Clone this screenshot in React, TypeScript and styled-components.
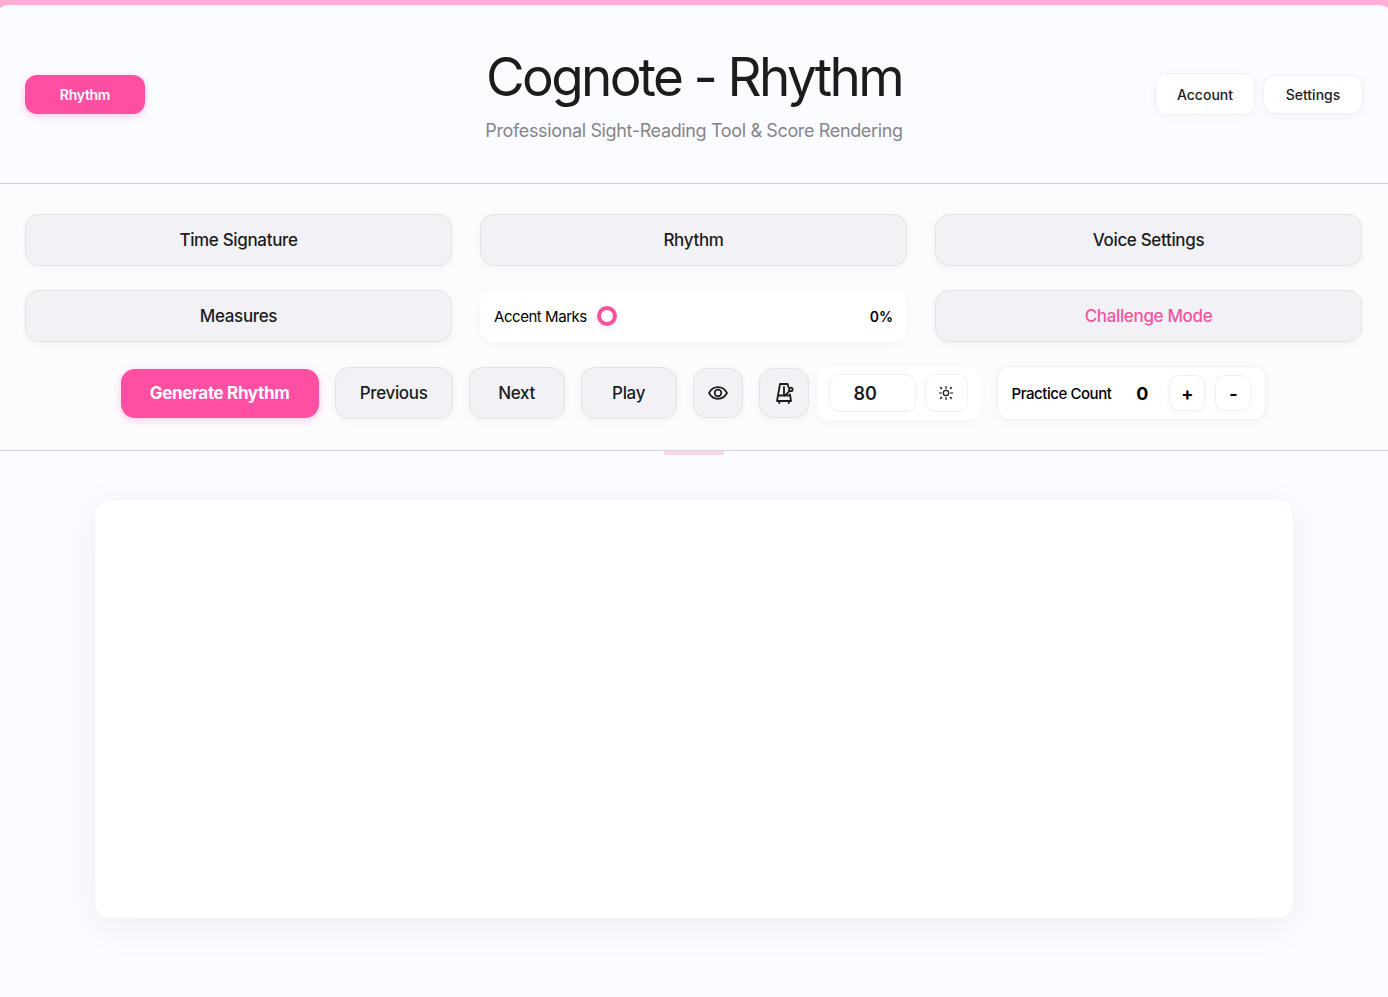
import React, { useState } from 'react';
import styled, { createGlobalStyle, css } from 'styled-components';

const GlobalStyle = createGlobalStyle`
  *, *::before, *::after { box-sizing: border-box; }
  body {
    margin: 0;
    background: #ffaed5;
    color: #1c1c1e;
    font-family: Inter, "Liberation Sans", sans-serif;
    -webkit-font-smoothing: antialiased;
  }
  button, input { font: inherit; color: inherit; letter-spacing: inherit; }
  button { cursor: pointer; }
`;

const Page = styled.div`
  min-height: 100vh;
  padding-top: 5px;
  display: flex;
  flex-direction: column;
`;

const Shell = styled.div`
  flex: 1;
  display: flex;
  flex-direction: column;
  border-radius: 10px 10px 0 0 / 4px 4px 0 0;
  background: #fbfcff;
`;

const Header = styled.header`
  display: grid;
  grid-template-columns: 1fr auto 1fr;
  align-items: center;
  padding: 40px 25px;
  min-height: 179px;
  border-bottom: 1px solid #d1d1d6;
`;

const Heading = styled.div`
  text-align: center;
`;

const Title = styled.h1`
  margin: 0;
  font-size: 53px;
  line-height: 64px;
  font-weight: 400;
  letter-spacing: -0.05em;
`;

const Subtitle = styled.p`
  margin: 10px 0 0;
  font-size: 18px;
  line-height: 24px;
  letter-spacing: -0.02em;
  color: #85858a;
`;

const HeaderActions = styled.div`
  display: flex;
  align-items: center;
  justify-content: flex-end;
  gap: 8px;
`;

const surface = css`
  border: 1px solid #f0f0f2;
  background: #fff;
  box-shadow: 0 2px 8px rgba(0, 0, 0, 0.04);
`;

const ModeButton = styled.button`
  justify-self: start;
  width: 120px;
  height: 39px;
  border: 0;
  border-radius: 12px;
  background: #ff4fa3;
  color: #fff;
  font-size: 14px;
  font-weight: 600;
  letter-spacing: -0.02em;
  box-shadow: 0 2px 8px rgba(255, 79, 163, 0.3);
`;

const HeaderButton = styled.button<{ $tall?: boolean }>`
  ${surface}
  width: 100px;
  height: ${(p) => (p.$tall ? 42 : 39)}px;
  padding: 0;
  border-radius: 12px;
  font-size: 14px;
  font-weight: 500;
`;

const Controls = styled.section`
  padding: 30px 26px 30px 25px;
  border-bottom: 1px solid #d1d1d6;
  background: #fcfcfe;
`;

const SettingsGrid = styled.div`
  display: grid;
  grid-template-columns: repeat(3, 1fr);
  gap: 24px 28px;
`;

const SoftButton = styled.button<{ $accent?: boolean }>`
  height: 52px;
  padding: 0 25px;
  border: 1px solid #e3e3e6;
  border-radius: 14px;
  background: #f2f2f6;
  color: ${(p) => (p.$accent ? '#f0559f' : '#1c1c1e')};
  font-size: 17px;
  font-weight: 500;
  letter-spacing: -0.02em;
  box-shadow: 0 2px 8px rgba(0, 0, 0, 0.04);
`;

const AccentPanel = styled.div`
  display: flex;
  align-items: center;
  gap: 10px;
  height: 52px;
  padding: 0 14px;
  border-radius: 14px;
  background: #fff;
  color: #000;
  font-size: 15px;
  letter-spacing: -0.03em;
  box-shadow: 0 2px 8px rgba(0, 0, 0, 0.04);
`;

const AccentValue = styled.output`
  font-size: 14px;
  font-weight: 600;
  letter-spacing: 0;
`;

const Slider = styled.input`
  flex: 1;
  min-width: 0;
  height: 20px;
  margin: 0;
  appearance: none;
  background: transparent;

  &::-webkit-slider-thumb {
    appearance: none;
    width: 20px;
    height: 20px;
    border: 4px solid #f7549f;
    border-radius: 50%;
    background: #fff;
    box-shadow: 0 2px 8px rgba(0, 122, 255, 0.1);
  }
`;

const Toolbar = styled.div`
  display: flex;
  flex-wrap: wrap;
  align-items: center;
  justify-content: center;
  gap: 16px;
  margin-top: 24px;
`;

const GenerateButton = styled.button`
  width: 198px;
  height: 49px;
  padding: 0;
  border: 0;
  border-radius: 14px;
  background: #ff4fa3;
  color: #fff;
  font-size: 17px;
  font-weight: 700;
  letter-spacing: -0.02em;
  box-shadow: 0 2px 8px rgba(255, 79, 163, 0.3);
`;

const ToolButton = styled(SoftButton)<{ $width: number }>`
  width: ${(p) => p.$width}px;
  padding: 0;
`;

const IconButton = styled(SoftButton)`
  display: grid;
  place-items: center;
  width: 50px;
  height: 50px;
  padding: 0;
`;

const TempoGroup = styled.div`
  display: flex;
  align-items: center;
  gap: 8px;
`;

const TempoPanel = styled.div`
  display: flex;
  gap: 9px;
  padding: 8px 13px 8px 12px;
  border-radius: 14px;
  background: #fff;
  box-shadow: 0 2px 8px rgba(0, 0, 0, 0.04);
`;

const TempoInput = styled.input`
  width: 87px;
  height: 38px;
  padding: 0 24px;
  border: 1px solid #f0f0f2;
  border-radius: 10px;
  background: #fff;
  font-size: 18px;
  font-weight: 600;
`;

const TempoButton = styled.button`
  display: grid;
  place-items: center;
  width: 43px;
  height: 38px;
  padding: 0;
  border: 1px solid #f0f0f2;
  border-radius: 10px;
  background: #fff;
`;

const PracticePanel = styled.div`
  ${surface}
  display: flex;
  align-items: center;
  gap: 10px;
  height: 54px;
  padding: 0 14px;
  border-radius: 12px;
  color: #000;
`;

const PracticeLabel = styled.span`
  font-size: 15px;
  font-weight: 500;
  letter-spacing: -0.03em;
`;

const PracticeCount = styled.output`
  width: 38px;
  padding-left: 4px;
  text-align: center;
  font-size: 18px;
  font-weight: 700;
`;

const StepButton = styled.button`
  ${surface}
  width: 36px;
  height: 36px;
  padding: 0;
  border-radius: 10px;
  font-size: 18px;
  font-weight: 700;
`;

const Stage = styled.main`
  position: relative;
  flex: 1;
  display: flex;
  padding: 49px 95px 79px;

  &::before {
    content: '';
    position: absolute;
    top: 0;
    left: 50%;
    width: 60px;
    height: 4px;
    margin-left: -30px;
    border-radius: 0 0 2px 2px;
    background: #fad4e7;
  }
`;

const Score = styled.div`
  flex: 1;
  min-height: 418px;
  border-radius: 14px;
  background: #fff;
  box-shadow: 0 0 1px rgba(0, 0, 0, 0.1), 0 8px 40px rgba(0, 0, 0, 0.06);
`;

const EyeIcon = () => (
  <svg width="20" height="14" viewBox="0 0 20 14" fill="none" stroke="currentColor" strokeWidth="1.7" aria-hidden="true">
    <path d="M1 7C3 3.300 6.200 1.200 10 1.200S17 3.300 19 7C17 10.700 13.800 12.800 10 12.800S3 10.700 1 7Z" strokeLinejoin="round" />
    <circle cx="10" cy="7" r="3.300" />
  </svg>
);

const MetronomeIcon = () => (
  <svg width="20" height="22" viewBox="0 0 20 22" fill="none" stroke="currentColor" strokeWidth="1.8" strokeLinecap="round" strokeLinejoin="round" aria-hidden="true">
    <path d="M14.400 5 13.600 2H6L3 19H17L16 12.500" />
    <path d="M4.300 13.500H15.500M10 5V13.300M10.500 13.800 15.700 8.800M5.300 19.500V21M14.800 19.500V21" />
    <circle cx="16.800" cy="7.400" r="1.800" />
  </svg>
);

const SunIcon = () => (
  <svg width="16" height="16" viewBox="0 0 16 16" fill="none" stroke="currentColor" strokeWidth="1.2" aria-hidden="true">
    <circle cx="8" cy="8" r="2.700" />
    <path d="M8 1V4M8 12V15M1 8H4M12 8H15" />
    <path d="M2.200 2.200 3.900 3.900M12.100 12.100 13.800 13.800M13.800 2.200 12.100 3.900M3.900 12.100 2.200 13.800" strokeWidth="1.5" />
  </svg>
);

export default function App() {
  const [accent, setAccent] = useState(0);
  const [tempo, setTempo] = useState('80');
  const [count, setCount] = useState(0);

  return (
    <>
      <GlobalStyle />
      <Page>
        <Shell>
          <Header>
            <ModeButton type="button">Rhythm</ModeButton>
            <Heading>
              <Title>Cognote - Rhythm</Title>
              <Subtitle>Professional Sight-Reading Tool &amp; Score Rendering</Subtitle>
            </Heading>
            <HeaderActions>
              <HeaderButton type="button" $tall>Account</HeaderButton>
              <HeaderButton type="button">Settings</HeaderButton>
            </HeaderActions>
          </Header>
          <Controls>
            <SettingsGrid>
              <SoftButton type="button">Time Signature</SoftButton>
              <SoftButton type="button">Rhythm</SoftButton>
              <SoftButton type="button">Voice Settings</SoftButton>
              <SoftButton type="button">Measures</SoftButton>
              <AccentPanel>
                <label htmlFor="accent">Accent Marks</label>
                <Slider
                  id="accent"
                  type="range"
                  min={0}
                  max={100}
                  value={accent}
                  onChange={(e) => setAccent(Number(e.target.value))}
                />
                <AccentValue htmlFor="accent">{accent}%</AccentValue>
              </AccentPanel>
              <SoftButton type="button" $accent>Challenge Mode</SoftButton>
            </SettingsGrid>
            <Toolbar>
              <GenerateButton type="button">Generate Rhythm</GenerateButton>
              <ToolButton type="button" $width={118}>Previous</ToolButton>
              <ToolButton type="button" $width={96}>Next</ToolButton>
              <ToolButton type="button" $width={96}>Play</ToolButton>
              <IconButton type="button" aria-label="Show score"><EyeIcon /></IconButton>
              <TempoGroup>
                <IconButton type="button" aria-label="Metronome"><MetronomeIcon /></IconButton>
                <TempoPanel>
                  <TempoInput
                    aria-label="Tempo"
                    inputMode="numeric"
                    value={tempo}
                    onChange={(e) => setTempo(e.target.value)}
                  />
                  <TempoButton type="button" aria-label="Flash on beat"><SunIcon /></TempoButton>
                </TempoPanel>
              </TempoGroup>
              <PracticePanel>
                <PracticeLabel id="practice">Practice Count</PracticeLabel>
                <PracticeCount aria-labelledby="practice">{count}</PracticeCount>
                <StepButton type="button" onClick={() => setCount(count + 1)}>+</StepButton>
                <StepButton type="button" onClick={() => setCount(Math.max(0, count - 1))}>-</StepButton>
              </PracticePanel>
            </Toolbar>
          </Controls>
          <Stage>
            <Score />
          </Stage>
        </Shell>
      </Page>
    </>
  );
}
